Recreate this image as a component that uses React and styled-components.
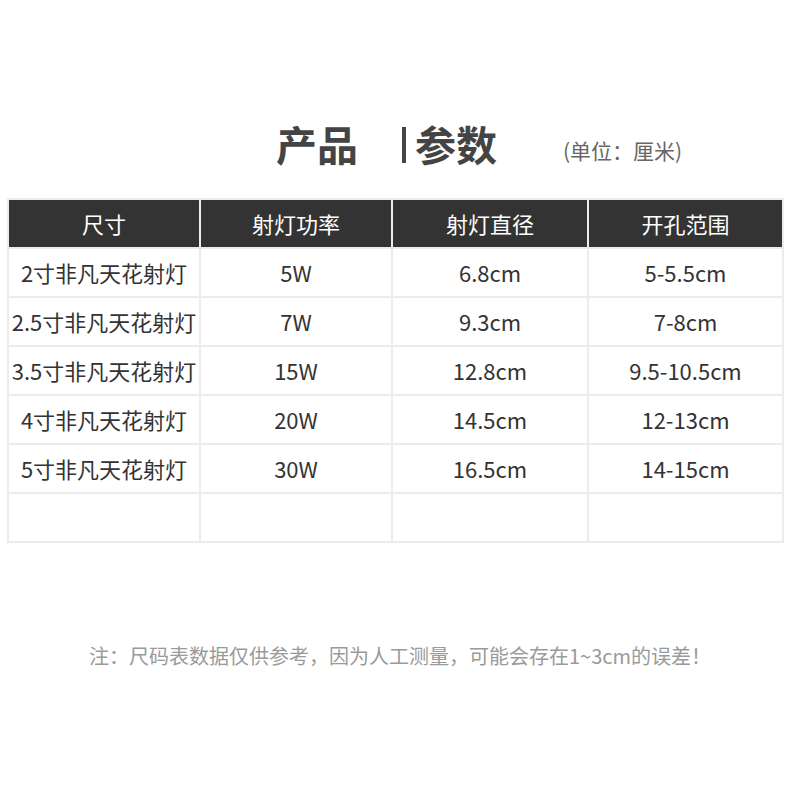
import React from 'react';
import styled, { createGlobalStyle } from 'styled-components';

const GlobalStyle = createGlobalStyle`
  body {
    margin: 0;
    background: #ffffff;
    font-family: "Noto Sans CJK SC", "Noto Sans", sans-serif;
  }
`;

const Page = styled.div`
  width: 800px;
  height: 800px;
  background: #ffffff;
  padding-top: 122px;
  box-sizing: border-box;
`;

const TitleRow = styled.div`
  display: flex;
  align-items: center;
  padding-left: 276px;
  height: 42px;
`;

const TitleText = styled.span`
  font-size: 41px;
  line-height: 42px;
  font-weight: 700;
  color: #444444;
`;

const Bar = styled.span`
  width: 4px;
  height: 36px;
  background: #444444;
  margin: 3px 9px 0 44px;
`;

const Unit = styled.span`
  font-size: 21px;
  line-height: 21px;
  color: #666666;
  margin: 14px 0 0 66px;
`;

const Table = styled.table`
  margin: 34px 0 0 7px;
  width: 775px;
  border-collapse: collapse;
  table-layout: fixed;
`;

const HeadCell = styled.th`
  background: #333333;
  color: #ffffff;
  font-weight: 400;
  font-size: 22px;
  line-height: 26px;
  height: 45px;
  padding: 0 0 2px;
  border: 2px solid #ececec;
`;

const Cell = styled.td`
  color: #333333;
  font-size: 22px;
  line-height: 26px;
  height: 45px;
  padding: 0 0 2px;
  text-align: center;
  border: 2px solid #ececec;
  white-space: nowrap;
`;

const Note = styled.p`
  margin: 98px 0 0;
  text-align: center;
  font-size: 20px;
  color: #9a9a9a;
`;

const columns = ['尺寸', '射灯功率', '射灯直径', '开孔范围'];
const widths = [192, 192, 196, 195];

const rows = [
  ['2寸非凡天花射灯', '5W', '6.8cm', '5-5.5cm'],
  ['2.5寸非凡天花射灯', '7W', '9.3cm', '7-8cm'],
  ['3.5寸非凡天花射灯', '15W', '12.8cm', '9.5-10.5cm'],
  ['4寸非凡天花射灯', '20W', '14.5cm', '12-13cm'],
  ['5寸非凡天花射灯', '30W', '16.5cm', '14-15cm'],
  ['', '', '', ''],
];

export default function App() {
  return (
    <Page>
      <GlobalStyle />
      <TitleRow>
        <TitleText>产品</TitleText>
        <Bar />
        <TitleText>参数</TitleText>
        <Unit>(单位：厘米)</Unit>
      </TitleRow>
      <Table>
        <colgroup>
          {widths.map((w, i) => (
            <col key={i} style={{ width: w }} />
          ))}
        </colgroup>
        <thead>
          <tr>
            {columns.map((c) => (
              <HeadCell key={c}>{c}</HeadCell>
            ))}
          </tr>
        </thead>
        <tbody>
          {rows.map((r, i) => (
            <tr key={i}>
              {r.map((v, j) => (
                <Cell key={j}>{v}</Cell>
              ))}
            </tr>
          ))}
        </tbody>
      </Table>
      <Note>注：尺码表数据仅供参考，因为人工测量，可能会存在1~3cm的误差！</Note>
    </Page>
  );
}
